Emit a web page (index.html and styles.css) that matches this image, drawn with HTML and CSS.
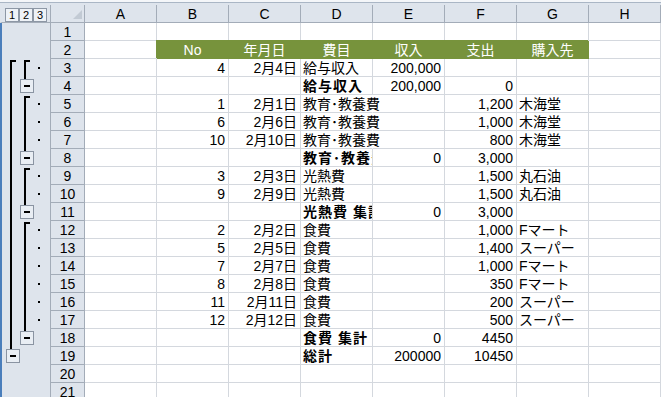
FILE: index.html
```html
<!DOCTYPE html>
<html lang="ja">
<head>
<meta charset="utf-8">
<title>Sheet</title>
<link rel="stylesheet" href="styles.css">
</head>
<body>
<div class="topband"></div>
<div class="sheet">
  <div class="gut gut-head"><span class="lvl">1</span><span class="lvl">2</span><span class="lvl">3</span></div>
  <div class="corner"><span class="tri"></span></div>
  <div class="colh">A</div><div class="colh">B</div><div class="colh">C</div><div class="colh">D</div><div class="colh">E</div><div class="colh">F</div><div class="colh">G</div><div class="colh">H</div>

  <!-- row 1 -->
  <div class="gut"></div><div class="rowh">1</div>
  <div class="c"></div><div class="c"></div><div class="c"></div><div class="c"></div><div class="c"></div><div class="c"></div><div class="c"></div><div class="c"></div>

  <!-- row 2 -->
  <div class="gut"></div><div class="rowh">2</div>
  <div class="c"></div><div class="c hd">No</div><div class="c hd">年月日</div><div class="c hd">費目</div><div class="c hd">収入</div><div class="c hd">支出</div><div class="c hd">購入先</div><div class="c"></div>

  <!-- row 3 -->
  <div class="gut"><span class="lane"><i class="start"></i></span><span class="lane"><i class="start"></i></span><span class="lane"><i class="dot"></i></span></div><div class="rowh">3</div>
  <div class="c"></div><div class="c r">4</div><div class="c r">2月4日</div><div class="c l">給与収入</div><div class="c r">200,000</div><div class="c"></div><div class="c"></div><div class="c"></div>

  <!-- row 4 -->
  <div class="gut"><span class="lane"><i class="line"></i></span><span class="lane"><i class="seg"></i><b class="minus"></b></span><span class="lane"></span></div><div class="rowh">4</div>
  <div class="c"></div><div class="c"></div><div class="c"></div><div class="c l b">給与収入</div><div class="c r">200,000</div><div class="c r">0</div><div class="c"></div><div class="c"></div>

  <!-- row 5 -->
  <div class="gut"><span class="lane"><i class="line"></i></span><span class="lane"><i class="start"></i></span><span class="lane"><i class="dot"></i></span></div><div class="rowh">5</div>
  <div class="c"></div><div class="c r">1</div><div class="c r">2月1日</div><div class="c l ov">教育･教養費</div><div class="c"></div><div class="c r">1,200</div><div class="c l">木海堂</div><div class="c"></div>

  <!-- row 6 -->
  <div class="gut"><span class="lane"><i class="line"></i></span><span class="lane"><i class="line"></i></span><span class="lane"><i class="dot"></i></span></div><div class="rowh">6</div>
  <div class="c"></div><div class="c r">6</div><div class="c r">2月6日</div><div class="c l ov">教育･教養費</div><div class="c"></div><div class="c r">1,000</div><div class="c l">木海堂</div><div class="c"></div>

  <!-- row 7 -->
  <div class="gut"><span class="lane"><i class="line"></i></span><span class="lane"><i class="line"></i></span><span class="lane"><i class="dot"></i></span></div><div class="rowh">7</div>
  <div class="c"></div><div class="c r">10</div><div class="c r">2月10日</div><div class="c l ov">教育･教養費</div><div class="c"></div><div class="c r">800</div><div class="c l">木海堂</div><div class="c"></div>

  <!-- row 8 -->
  <div class="gut"><span class="lane"><i class="line"></i></span><span class="lane"><i class="seg"></i><b class="minus"></b></span><span class="lane"></span></div><div class="rowh">8</div>
  <div class="c"></div><div class="c"></div><div class="c"></div><div class="c l b clip">教育･教養費 集計</div><div class="c r">0</div><div class="c r">3,000</div><div class="c"></div><div class="c"></div>

  <!-- row 9 -->
  <div class="gut"><span class="lane"><i class="line"></i></span><span class="lane"><i class="start"></i></span><span class="lane"><i class="dot"></i></span></div><div class="rowh">9</div>
  <div class="c"></div><div class="c r">3</div><div class="c r">2月3日</div><div class="c l">光熱費</div><div class="c"></div><div class="c r">1,500</div><div class="c l">丸石油</div><div class="c"></div>

  <!-- row 10 -->
  <div class="gut"><span class="lane"><i class="line"></i></span><span class="lane"><i class="line"></i></span><span class="lane"><i class="dot"></i></span></div><div class="rowh">10</div>
  <div class="c"></div><div class="c r">9</div><div class="c r">2月9日</div><div class="c l">光熱費</div><div class="c"></div><div class="c r">1,500</div><div class="c l">丸石油</div><div class="c"></div>

  <!-- row 11 -->
  <div class="gut"><span class="lane"><i class="line"></i></span><span class="lane"><i class="seg"></i><b class="minus"></b></span><span class="lane"></span></div><div class="rowh">11</div>
  <div class="c"></div><div class="c"></div><div class="c"></div><div class="c l b clip">光熱費 集計</div><div class="c r">0</div><div class="c r">3,000</div><div class="c"></div><div class="c"></div>

  <!-- row 12 -->
  <div class="gut"><span class="lane"><i class="line"></i></span><span class="lane"><i class="start"></i></span><span class="lane"><i class="dot"></i></span></div><div class="rowh">12</div>
  <div class="c"></div><div class="c r">2</div><div class="c r">2月2日</div><div class="c l">食費</div><div class="c"></div><div class="c r">1,000</div><div class="c l">Fマート</div><div class="c"></div>

  <!-- row 13 -->
  <div class="gut"><span class="lane"><i class="line"></i></span><span class="lane"><i class="line"></i></span><span class="lane"><i class="dot"></i></span></div><div class="rowh">13</div>
  <div class="c"></div><div class="c r">5</div><div class="c r">2月5日</div><div class="c l">食費</div><div class="c"></div><div class="c r">1,400</div><div class="c l">スーパー</div><div class="c"></div>

  <!-- row 14 -->
  <div class="gut"><span class="lane"><i class="line"></i></span><span class="lane"><i class="line"></i></span><span class="lane"><i class="dot"></i></span></div><div class="rowh">14</div>
  <div class="c"></div><div class="c r">7</div><div class="c r">2月7日</div><div class="c l">食費</div><div class="c"></div><div class="c r">1,000</div><div class="c l">Fマート</div><div class="c"></div>

  <!-- row 15 -->
  <div class="gut"><span class="lane"><i class="line"></i></span><span class="lane"><i class="line"></i></span><span class="lane"><i class="dot"></i></span></div><div class="rowh">15</div>
  <div class="c"></div><div class="c r">8</div><div class="c r">2月8日</div><div class="c l">食費</div><div class="c"></div><div class="c r">350</div><div class="c l">Fマート</div><div class="c"></div>

  <!-- row 16 -->
  <div class="gut"><span class="lane"><i class="line"></i></span><span class="lane"><i class="line"></i></span><span class="lane"><i class="dot"></i></span></div><div class="rowh">16</div>
  <div class="c"></div><div class="c r">11</div><div class="c r">2月11日</div><div class="c l">食費</div><div class="c"></div><div class="c r">200</div><div class="c l">スーパー</div><div class="c"></div>

  <!-- row 17 -->
  <div class="gut"><span class="lane"><i class="line"></i></span><span class="lane"><i class="line"></i></span><span class="lane"><i class="dot"></i></span></div><div class="rowh">17</div>
  <div class="c"></div><div class="c r">12</div><div class="c r">2月12日</div><div class="c l">食費</div><div class="c"></div><div class="c r">500</div><div class="c l">スーパー</div><div class="c"></div>

  <!-- row 18 -->
  <div class="gut"><span class="lane"><i class="line"></i></span><span class="lane"><i class="seg"></i><b class="minus"></b></span><span class="lane"></span></div><div class="rowh">18</div>
  <div class="c"></div><div class="c"></div><div class="c"></div><div class="c l b clip">食費 集計</div><div class="c r">0</div><div class="c r">4450</div><div class="c"></div><div class="c"></div>

  <!-- row 19 -->
  <div class="gut"><span class="lane"><i class="seg"></i><b class="minus"></b></span><span class="lane"></span><span class="lane"></span></div><div class="rowh">19</div>
  <div class="c"></div><div class="c"></div><div class="c"></div><div class="c l b clip">総計</div><div class="c r">200000</div><div class="c r">10450</div><div class="c"></div><div class="c"></div>

  <!-- row 20 -->
  <div class="gut"></div><div class="rowh">20</div>
  <div class="c"></div><div class="c"></div><div class="c"></div><div class="c"></div><div class="c"></div><div class="c"></div><div class="c"></div><div class="c"></div>

  <!-- row 21 -->
  <div class="gut"></div><div class="rowh">21</div>
  <div class="c"></div><div class="c"></div><div class="c"></div><div class="c"></div><div class="c"></div><div class="c"></div><div class="c"></div><div class="c"></div>
</div>
</body>
</html>
```

FILE: styles.css
```css
:root {
  --hdr: #dee4ec;
  --hb: #a3acb8;
  --grid: #d4d8de;
  --green: #77933c;
  --blue: #4a7ebb;
}
* { box-sizing: border-box; }
html, body {
  margin: 0;
  padding: 0;
  width: 661px;
  height: 397px;
  overflow: hidden;
  background: #fff;
}
body {
  font-family: "Liberation Sans", "Noto Sans CJK JP", sans-serif;
  font-size: 14px;
  color: #000;
}
.topband {
  height: 5px;
  background: linear-gradient(#f4f6f9 0 2px, #aab6c5 2px 3px, var(--hdr) 3px);
}
.sheet {
  display: grid;
  grid-template-columns: 51px 34px repeat(8, 72px);
  grid-auto-rows: 18px;
}
.gut {
  background: var(--hdr);
  border-left: 2px solid var(--blue);
  border-right: 1px solid var(--hb);
  display: flex;
  padding-left: 4px;
}
.gut-head {
  border-left: 2px solid var(--hdr);
  border-bottom: 1px solid var(--hb);
  padding: 3px 0 0 3px;
  align-items: flex-start;
}
.lvl {
  width: 14px;
  height: 14px;
  border: 1px solid #8d97a5;
  background: #eef2f7;
  font-size: 11px;
  line-height: 12px;
  text-align: center;
}
.corner {
  background: var(--hdr);
  border-right: 1px solid var(--hb);
  border-bottom: 1px solid var(--hb);
  display: flex;
  justify-content: flex-end;
  align-items: flex-end;
  padding: 0 2px 3px 0;
}
.tri {
  width: 0;
  height: 0;
  border-left: 9px solid transparent;
  border-bottom: 9px solid #c2cad4;
}
.colh {
  background: var(--hdr);
  border-right: 1px solid var(--hb);
  border-bottom: 1px solid var(--hb);
  text-align: center;
  line-height: 18px;
  font-size: 14px;
}
.rowh {
  background: var(--hdr);
  border-right: 1px solid var(--hb);
  border-bottom: 1px solid var(--hb);
  text-align: center;
  line-height: 18px;
}
.lane {
  width: 14px;
  display: flex;
  flex-direction: column;
}
.start {
  margin: 1px 0 0 4px;
  width: 6px;
  flex: 1;
  border-left: 2px solid #000;
  border-top: 2px solid #000;
}
.line {
  margin-left: 4px;
  width: 2px;
  flex: 1;
  background: #000;
}
.seg {
  margin-left: 4px;
  width: 2px;
  height: 2px;
  background: #000;
}
.minus {
  width: 14px;
  height: 14px;
  border: 1px solid #8a94a2;
  background: #e9eef4;
  display: flex;
  align-items: center;
  justify-content: center;
}
.minus::after {
  content: "";
  width: 6px;
  height: 2px;
  background: #000;
}
.dot {
  margin: auto 0 auto 4px;
  width: 2px;
  height: 2px;
  background: #000;
}
.c {
  border-right: 1px solid var(--grid);
  border-bottom: 1px solid var(--grid);
  white-space: nowrap;
  line-height: 18px;
}
.r { text-align: right; padding-right: 3px; }
.l { text-align: left; padding-left: 2px; }
.b { font-weight: bold; letter-spacing: 1px; }
.clip { overflow: hidden; }
.ov { border-right-color: #fff; }
.hd {
  background: var(--green);
  border-right-color: var(--green);
  border-bottom-color: var(--green);
  box-shadow: -1px -1px 0 0 var(--green);
  color: #fff;
  text-align: center;
}
```
